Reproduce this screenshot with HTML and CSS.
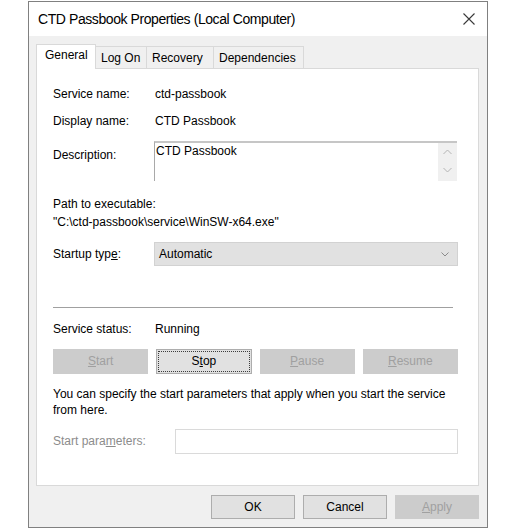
FILE: index.html
```html
<!DOCTYPE html>
<html>
<head>
<meta charset="utf-8">
<title>CTD Passbook Properties</title>
<link rel="stylesheet" href="styles.css">
</head>
<body>
<div class="window">
  <div class="titlebar">
    <span class="title">CTD Passbook Properties (Local Computer)</span>
    <svg class="close" width="12" height="12" viewBox="0 0 12 12"><path d="M0.5 0.5 L11.5 11.5 M11.5 0.5 L0.5 11.5" stroke="#3a3a3a" stroke-width="1.1" fill="none"/></svg>
  </div>
  <div class="client">
    <div class="tabs">
      <div class="tab active t-general">General</div>
      <div class="tab t-logon">Log On</div>
      <div class="tab t-recovery">Recovery</div>
      <div class="tab t-deps">Dependencies</div>
    </div>
    <div class="panel">
      <div class="row r-name"><span class="label">Service name:</span><span>ctd-passbook</span></div>
      <div class="row r-display"><span class="label">Display name:</span><span>CTD Passbook</span></div>
      <div class="row r-desc">
        <span class="label desc-label">Description:</span>
        <div class="textbox">
          <span class="textbox-text">CTD Passbook</span>
          <div class="scroll">
            <svg width="9" height="6" viewBox="0 0 9 6"><path d="M0.5 5 L4.5 1 L8.5 5" stroke="#b4b4b4" fill="none"/></svg>
            <svg width="9" height="6" viewBox="0 0 9 6"><path d="M0.5 1 L4.5 5 L8.5 1" stroke="#b4b4b4" fill="none"/></svg>
          </div>
        </div>
      </div>
      <div class="line r-path">Path to executable:</div>
      <div class="line r-pathval">"C:\ctd-passbook\service\WinSW-x64.exe"</div>
      <div class="row r-startup">
        <span class="label">Startup typ<u>e</u>:</span>
        <div class="select">
          <span>Automatic</span>
          <svg width="8" height="5" viewBox="0 0 8 5"><path d="M0.5 0.5 L4 4 L7.5 0.5" stroke="#8a8a8a" fill="none"/></svg>
        </div>
      </div>
      <div class="sep"></div>
      <div class="row r-status"><span class="label">Service status:</span><span>Running</span></div>
      <div class="buttons">
        <div class="btn disabled"><u>S</u>tart</div>
        <div class="btn focused">S<u>t</u>op</div>
        <div class="btn disabled"><u>P</u>ause</div>
        <div class="btn disabled"><u>R</u>esume</div>
      </div>
      <p class="para">You can specify the start parameters that apply when you start the service from here.</p>
      <div class="row r-params">
        <span class="label params-label">Start para<u>m</u>eters:</span>
        <div class="input"></div>
      </div>
    </div>
    <div class="footer">
      <div class="btn fbtn">OK</div>
      <div class="btn fbtn">Cancel</div>
      <div class="btn fbtn disabled"><u>A</u>pply</div>
    </div>
  </div>
</div>
</body>
</html>
```

FILE: styles.css
```css
* { box-sizing: border-box; }
html, body { margin: 0; padding: 0; background: #ffffff; }
body {
  font-family: "Liberation Sans", Arial, sans-serif;
  font-size: 12px;
  line-height: 15px;
  color: #000;
}
.window {
  margin: 1px 0 0 28px;
  width: 460px;
  height: 527px;
  border: 1px solid #808080;
  background: #f0f0f0;
  display: flex;
  flex-direction: column;
}
.titlebar {
  height: 34px;
  background: #ffffff;
  display: flex;
  align-items: center;
  padding-left: 9px;
  padding-right: 12px;
}
.title {
  font-size: 14px;
  letter-spacing: -0.42px;
  color: #000;
  flex: 1;
  padding-top: 1px;
}
.close { display: block; margin-top: -1px; }
.client {
  padding: 8px 8px 0 7px;
  display: flex;
  flex-direction: column;
}
.tabs {
  display: flex;
  align-items: flex-end;
  height: 24px;
}
.tab {
  height: 22px;
  border: 1px solid #d9d9d9;
  border-bottom: none;
  background: #f0f0f0;
  margin-left: -1px;
  padding-left: 5px;
  padding-top: 4px;
  line-height: 15px;
}
.tab.active {
  height: 25px;
  margin-bottom: -1px;
  background: #ffffff;
  margin-left: 0;
  padding-left: 8px;
  padding-top: 3px;
  position: relative;
  z-index: 1;
}
.t-general { width: 60px; }
.t-logon { width: 52px; }
.t-recovery { width: 68px; }
.t-deps { width: 91px; }
.panel {
  height: 418px;
  background: #ffffff;
  border: 1px solid #d9d9d9;
  padding: 18px 20px 0 16px;
}
.row { display: flex; align-items: center; }
.label { width: 102px; flex: none; }
.r-display { margin-top: 12px; }
.r-desc { margin-top: 12px; align-items: flex-start; }
.desc-label { padding-top: 7px; }
.textbox {
  margin-left: -1px;
  width: 303px;
  height: 40px;
  border-top: 2px solid #c6c6c6;
  border-left: 1px solid #a9a9a9;
  display: flex;
  justify-content: space-between;
}
.textbox-text { padding-left: 1px; padding-top: 1px; line-height: 14px; }
.scroll {
  width: 19px;
  height: 38px;
  background: #f0f0f0;
  display: flex;
  flex-direction: column;
  align-items: center;
  justify-content: space-between;
  padding: 6px 0 8px;
}
.scroll svg { display: block; }
.r-path { margin-top: 16px; }
.r-pathval { margin-top: 3px; }
.r-startup { margin-top: 12px; height: 24px; }
.select {
  margin-left: -1px;
  width: 304px;
  height: 24px;
  background: #e1e1e1;
  border: 1px solid #d2d2d2;
  display: flex;
  align-items: center;
  justify-content: space-between;
  padding: 0 8px 0 4px;
}
.select svg { display: block; }
.sep {
  margin-top: 41px;
  width: 400px;
  height: 1px;
  background: #a0a0a0;
}
.r-status { margin-top: 14px; }
.buttons {
  margin-top: 12px;
  display: grid;
  grid-template-columns: repeat(4, 1fr);
  column-gap: 8px;
  height: 25px;
  width: 405px;
}
.btn {
  display: flex;
  align-items: center;
  justify-content: center;
  background: #e1e1e1;
  border: 1px solid #adadad;
  color: #000;
}
.btn.disabled {
  background: #cccccc;
  border-color: #cccccc;
  color: #a0a0a0;
}
.btn.focused {
  outline: 1px dotted #3c3c3c;
  outline-offset: -3px;
}
.para {
  margin: 13px 0 0;
  line-height: 15.5px;
  width: 405px;
}
.r-params { margin-top: 11px; height: 25px; }
.params-label { width: 122px; color: #8c8c8c; }
.input {
  width: 283px;
  height: 25px;
  border: 1px solid #dadada;
  background: #fff;
}
.footer {
  margin-top: 9px;
  display: flex;
  justify-content: flex-end;
  gap: 8px;
}
.fbtn {
  width: 84px;
  height: 24px;
}
```
